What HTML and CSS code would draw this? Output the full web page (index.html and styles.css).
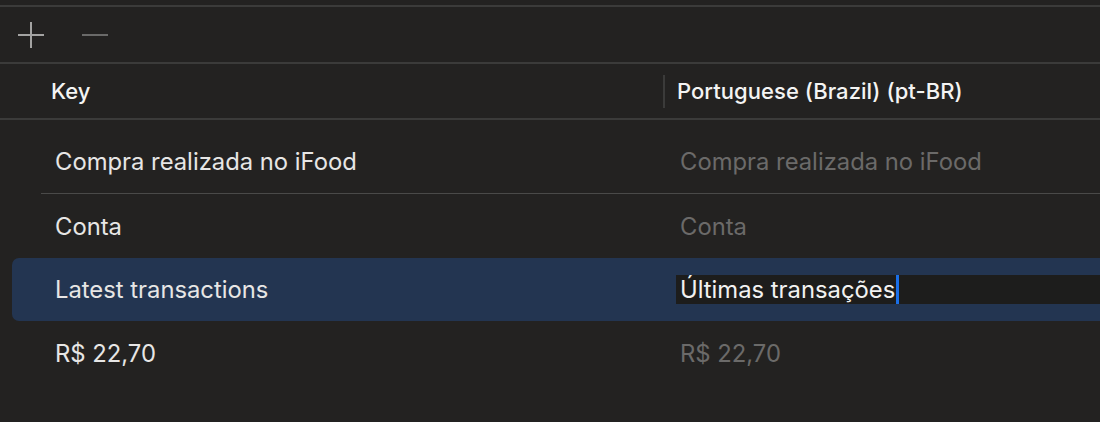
FILE: index.html
```html
<!DOCTYPE html>
<html lang="pt-BR">

<head>
    <meta charset="UTF-8">
    <meta name="viewport" content="width=device-width, initial-scale=1.0">
    <title>Localizable</title>
    <link rel="stylesheet" href="styles.css">
</head>

<body>

    <div class="toolbar">
        <button class="tool" title="Add">
            <svg width="28" height="28" viewBox="0 0 28 28">
                <path d="M14 1V27M1 14H27" stroke="#a3a3a2" stroke-width="2" fill="none" />
            </svg>
        </button>
        <button class="tool" title="Remove">
            <svg width="28" height="28" viewBox="0 0 28 28">
                <path d="M1 14H27" stroke="#6a6a69" stroke-width="2" fill="none" />
            </svg>
        </button>
    </div>

    <div class="header">
        <div class="col-key">Key</div>
        <div class="col-lang">Portuguese (Brazil) (pt-BR)</div>
    </div>

    <div class="rows">
        <div class="row divided">
            <div class="cell-key">Compra realizada no iFood</div>
            <div class="cell-value empty">Compra realizada no iFood</div>
        </div>
        <div class="row">
            <div class="cell-key">Conta</div>
            <div class="cell-value empty">Conta</div>
        </div>
        <div class="row selected">
            <div class="cell-key">Latest transactions</div>
            <div class="cell-value editing"><span class="edit-text">Últimas transações</span><span class="caret"></span></div>
        </div>
        <div class="row">
            <div class="cell-key">R$ 22,70</div>
            <div class="cell-value empty">R$ 22,70</div>
        </div>
    </div>

</body>

</html>
```

FILE: styles.css
```css
body {
    margin: 0;
    height: 422px;
    overflow: hidden;
    background-color: #232221;
    color: #e7e6e5;
    font-family: Inter, "Noto Sans", sans-serif;
}

.toolbar {
    display: flex;
    align-items: center;
    gap: 36px;
    height: 55px;
    padding-left: 17px;
    margin-top: 5px;
    border-top: 2px solid #3b3b3a;
    border-bottom: 2px solid #3b3b3a;
}

.tool {
    display: flex;
    padding: 0;
    border: none;
    background: none;
}

.header {
    display: flex;
    align-items: center;
    height: 54px;
    border-bottom: 2px solid #3b3b3a;
    font-size: 22px;
    font-weight: 500;
    letter-spacing: 0.05px;
    color: #f4f4f3;
}

.col-key {
    width: 612px;
    padding-left: 51px;
}

.col-lang {
    padding-left: 12px;
    border-left: 2px solid #3b3b3a;
    line-height: 33px;
}

.rows {
    padding-top: 10px;
}

.row {
    display: flex;
    align-items: center;
    height: 64px;
    font-size: 23.8px;
    margin-left: 12px;
    border-radius: 7px 0 0 7px;
}

.row.divided {
    height: 63px;
    border-bottom: 1px solid #4a4a49;
    margin-left: 41px;
    border-radius: 0;
}

.row.divided .cell-key {
    padding-left: 14px;
    width: 625px;
}

.row.selected {
    height: 63px;
    background-color: #233551;
}

.cell-key {
    width: 625px;
    padding-left: 43px;
}

.cell-value {
    padding-left: 1px;
}

.cell-value.empty {
    color: #6b6a69;
    padding-left: 0;
}

.cell-value.editing {
    display: flex;
    align-items: center;
    flex: 1;
    height: 29px;
    margin-left: -4px;
    background-color: #1d1d1c;
    color: #f2f2f1;
}

.edit-text {
    padding-left: 3px;
}

.caret {
    width: 3px;
    height: 29px;
    margin-left: 1px;
    background-color: #1a6fe8;
}
```
